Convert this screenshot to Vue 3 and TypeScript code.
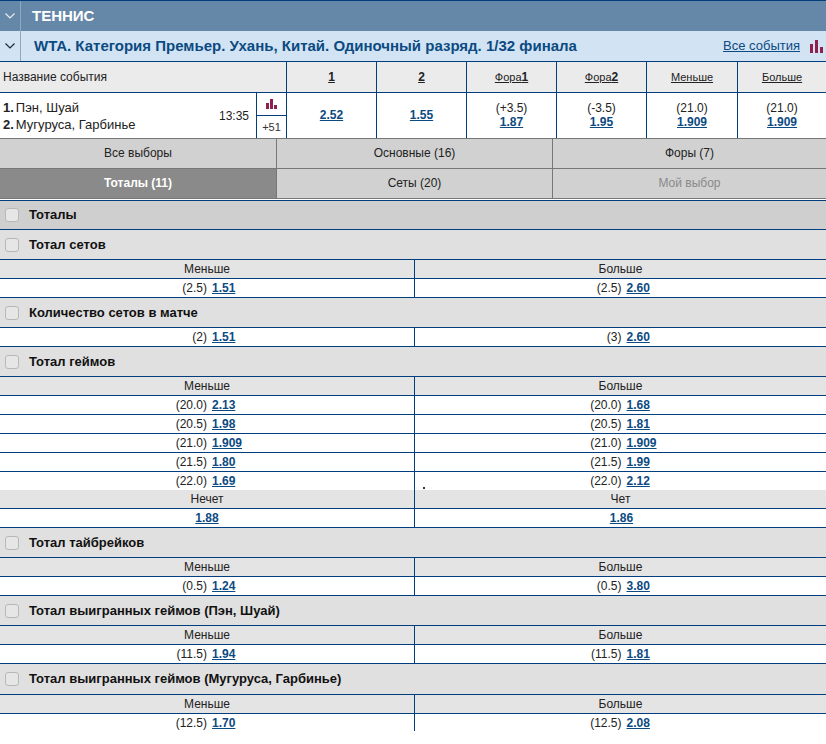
<script setup lang="ts">
type Odd = { line?: string; value: string }
type Row = { left: Odd; right: Odd }
type Section = { head?: [string, string]; rows: Row[] }
type Group = { title: string; sections: Section[] }

const odd = (line: string, value: string): Odd => ({ line, value })
const pair = (l: string, a: string, b: string, c = l): Row => ({ left: odd(l, a), right: odd(c, b) })

const lessMore: [string, string] = ['Меньше', 'Больше']

const columns = [
  { label: '1', big: true },
  { label: '2', big: true },
  { label: 'Фора', num: '1' },
  { label: 'Фора', num: '2' },
  { label: 'Меньше' },
  { label: 'Больше' }
]

const prices = [
  { value: '2.52' },
  { value: '1.55' },
  { line: '(+3.5)', value: '1.87' },
  { line: '(-3.5)', value: '1.95' },
  { line: '(21.0)', value: '1.909' },
  { line: '(21.0)', value: '1.909' }
]

const tabs = [
  { label: 'Все выборы' },
  { label: 'Основные (16)' },
  { label: 'Форы (7)' },
  { label: 'Тоталы (11)', active: true },
  { label: 'Сеты (20)' },
  { label: 'Мой выбор', off: true }
]

const groups: Group[] = [
  { title: 'Тотал сетов', sections: [{ head: lessMore, rows: [pair('(2.5)', '1.51', '2.60')] }] },
  {
    title: 'Количество сетов в матче',
    sections: [{ rows: [pair('(2)', '1.51', '2.60', '(3)')] }]
  },
  {
    title: 'Тотал геймов',
    sections: [
      {
        head: lessMore,
        rows: [
          pair('(20.0)', '2.13', '1.68'),
          pair('(20.5)', '1.98', '1.81'),
          pair('(21.0)', '1.909', '1.909'),
          pair('(21.5)', '1.80', '1.99'),
          pair('(22.0)', '1.69', '2.12')
        ]
      },
      { head: ['Нечет', 'Чет'], rows: [{ left: { value: '1.88' }, right: { value: '1.86' } }] }
    ]
  },
  { title: 'Тотал тайбрейков', sections: [{ head: lessMore, rows: [pair('(0.5)', '1.24', '3.80')] }] },
  {
    title: 'Тотал выигранных геймов (Пэн, Шуай)',
    sections: [{ head: lessMore, rows: [pair('(11.5)', '1.94', '1.81')] }]
  },
  {
    title: 'Тотал выигранных геймов (Мугуруса, Гарбинье)',
    sections: [{ head: lessMore, rows: [pair('(12.5)', '1.70', '2.08')] }]
  }
]
</script>

<template>
  <div class="page">
    <div class="sport-bar">
      <span class="toggle">
        <svg width="10" height="6" viewBox="0 0 10 6"><polyline points="0.5,0.5 5,5 9.5,0.5" fill="none" stroke="#e6edf3" stroke-width="1.2" /></svg>
      </span>
      <span class="sport-name">ТЕННИС</span>
    </div>

    <div class="league-bar">
      <span class="toggle">
        <svg width="10" height="6" viewBox="0 0 10 6"><polyline points="0.5,0.5 5,5 9.5,0.5" fill="none" stroke="#1f2a36" stroke-width="1.2" /></svg>
      </span>
      <span class="league-name">WTA. Категория Премьер. Ухань, Китай. Одиночный разряд. 1/32 финала</span>
      <a class="all-events">Все события</a>
      <svg class="stats-icon" width="13" height="13" viewBox="0 0 13 13">
        <rect x="0" y="4" width="3" height="9" />
        <rect x="5" y="0" width="3" height="13" />
        <rect x="10" y="7" width="3" height="6" />
      </svg>
    </div>

    <div class="market-grid market-head">
      <div class="cell name-cell">Название события</div>
      <div v-for="c in columns" :key="c.label + c.num" class="cell col-title">
        <u :class="{ big: c.big }">{{ c.label }}<b v-if="c.num">{{ c.num }}</b></u>
      </div>
    </div>

    <div class="market-grid event-row">
      <div class="teams">
        <div class="team-names">
          <div><b>1.</b>Пэн, Шуай</div>
          <div><b>2.</b>Мугуруса, Гарбинье</div>
        </div>
        <span class="time">13:35</span>
        <div class="extras">
          <span class="extras-icon">
            <svg width="11" height="10" viewBox="0 0 11 10">
              <rect x="0" y="4" width="3" height="6" />
              <rect x="4" y="0" width="3" height="10" />
              <rect x="8" y="6" width="3" height="4" />
            </svg>
          </span>
          <span class="extras-count">+51</span>
        </div>
      </div>
      <div v-for="(p, i) in prices" :key="i" class="cell price-cell">
        <span v-if="p.line">{{ p.line }}</span>
        <a class="price">{{ p.value }}</a>
      </div>
    </div>

    <div class="tabs">
      <div
        v-for="t in tabs"
        :key="t.label"
        class="tab"
        :class="{ active: t.active, off: t.off }"
      >
        {{ t.label }}
      </div>
    </div>

    <div class="all-title">
      <span class="check"></span>
      <span class="lift">Тоталы</span>
    </div>

    <template v-for="(g, gi) in groups" :key="g.title">
      <div class="group-title" :class="{ tall: gi === groups.length - 1 }">
        <span class="check"></span>
        <span :class="{ lift: gi === groups.length - 1 }">{{ g.title }}</span>
      </div>
      <template v-for="(s, si) in g.sections" :key="si">
        <div v-if="s.head" class="two-col head-row">
          <div>{{ s.head[0] }}</div>
          <div>{{ s.head[1] }}</div>
        </div>
        <div
          v-for="(r, ri) in s.rows"
          :key="ri"
          class="two-col odds-row"
          :class="{ seamless: si === 0 && g.sections.length > 1 && ri === s.rows.length - 1 }"
        >
          <div v-for="(o, oi) in [r.left, r.right]" :key="oi" :class="o.line ? 'split' : ''">
            <span v-if="o.line" class="line">{{ o.line }}</span>
            <a class="price">{{ o.value }}</a>
            <i v-if="o.value === '2.12'" class="stray-dot"></i>
          </div>
        </div>
      </template>
    </template>
  </div>
</template>

<style scoped>
.page {
  width: 826px;
  height: 731px;
  overflow: hidden;
  font-family: "Liberation Sans", Arial, sans-serif;
  font-size: 12px;
  color: #222;
  background: #fff;
}

.sport-bar {
  display: flex;
  align-items: center;
  height: 30px;
  background: #6688a8;
  border-top: 1px solid #003e7e;
}

.toggle {
  flex: none;
  width: 20px;
  height: 100%;
  display: flex;
  align-items: center;
  justify-content: center;
  border-right: 1px solid #8fa9c1;
}

.sport-name {
  margin-left: 11px;
  color: #fff;
  font-weight: bold;
  font-size: 15px;
  padding-bottom: 1px;
}

.league-bar {
  display: flex;
  align-items: center;
  height: 30px;
  background: #d2e4f3;
  border-bottom: 1px solid #003e7e;
}

.league-name {
  margin-left: 13px;
  padding-bottom: 2px;
  color: #0c4a82;
  font-weight: bold;
  font-size: 15px;
}

.all-events {
  margin-left: auto;
  padding-bottom: 1px;
  color: #0c4a82;
  font-size: 13px;
  text-decoration: underline;
}

.stats-icon {
  margin: 0 3px 0 10px;
  fill: #8e1f4e;
}

.market-grid {
  display: grid;
  grid-template-columns: 287px 90px 90px 90px 90px 91px 88px;
  border-bottom: 1px solid #003e7e;
}

.market-head {
  height: 30px;
  background: #ebebeb;
}

.event-row {
  height: 45px;
  border-bottom: none;
}

.cell {
  display: flex;
  align-items: center;
  justify-content: center;
  border-right: 1px solid #003e7e;
}

.cell:last-child {
  border-right: none;
}

.name-cell {
  justify-content: flex-start;
  padding-left: 3px;
}

.col-title u {
  color: #222;
  font-size: 11px;
}

.col-title u.big {
  font-size: 12px;
  font-weight: bold;
}

.col-title b {
  font-size: 12px;
}

.teams {
  display: flex;
  align-items: center;
  border-right: 1px solid #003e7e;
  padding-left: 3px;
}

.team-names {
  flex: 1;
  font-size: 13px;
  line-height: 17px;
}

.team-names b {
  margin-right: 2px;
}

.time {
  margin-right: 7px;
}

.extras {
  flex: none;
  width: 29px;
  height: 100%;
  display: flex;
  flex-direction: column;
  border-left: 1px solid #003e7e;
}

.extras-icon {
  height: 22px;
  display: flex;
  align-items: center;
  justify-content: center;
  border-bottom: 1px solid #003e7e;
  fill: #8e1f4e;
}

.extras-count {
  flex: 1;
  display: flex;
  align-items: center;
  justify-content: center;
  font-size: 11px;
  color: #333;
}

.price-cell {
  flex-direction: column;
  line-height: 14px;
  padding-bottom: 2px;
}

.price {
  color: #0c4a82;
  font-weight: bold;
  text-decoration: underline;
}

.tabs {
  display: grid;
  grid-template-columns: 277px 276px 273px;
  grid-auto-rows: 30px;
  border-top: 1px solid #777;
}

.tab {
  display: flex;
  align-items: center;
  justify-content: center;
  padding-bottom: 2px;
  background: #d1d1d1;
  border-right: 1px solid #777;
  border-bottom: 1px solid #777;
}

.tab:nth-child(3n) {
  border-right: none;
}

.tab.active {
  background: #8a8a8a;
  color: #fff;
  font-weight: bold;
}

.tab.off {
  color: #8a8a8a;
}

.all-title,
.group-title {
  display: flex;
  align-items: center;
  height: 29px;
  font-weight: bold;
  font-size: 13px;
  color: #111;
  border-bottom: 1px solid #003e7e;
  padding-left: 5px;
}

.all-title {
  height: 28px;
  margin-top: 1px;
  background: #cfcfcf;
  border-top: 1px solid #003e7e;
}

.lift {
  padding-bottom: 2px;
}

.group-title {
  background: #e0e0e0;
}

.group-title.tall {
  height: 30px;
}

.check {
  flex: none;
  width: 12px;
  height: 12px;
  margin-right: 10px;
  background: #e6e6e6;
  border: 1px solid #b8b8b8;
  border-radius: 3px;
}

.two-col {
  display: grid;
  grid-template-columns: 415px 411px;
  height: 18px;
  border-bottom: 1px solid #003e7e;
  line-height: 18px;
  text-align: center;
}

.two-col > div {
  position: relative;
}

.two-col > div:first-child {
  border-right: 1px solid #003e7e;
}

.odds-row > div:last-child {
  padding-left: 2px;
}

.two-col > .split {
  display: grid;
  grid-template-columns: 1fr 1fr;
}

.head-row {
  background: #e4e4e4;
}

.odds-row {
  background: #fff;
}

.seamless {
  border-bottom: none;
}

.line {
  text-align: right;
}

.split .price {
  justify-self: start;
  margin-left: 5px;
}

.stray-dot {
  position: absolute;
  left: 8px;
  top: 15px;
  width: 2px;
  height: 2px;
  background: #333;
}
</style>
